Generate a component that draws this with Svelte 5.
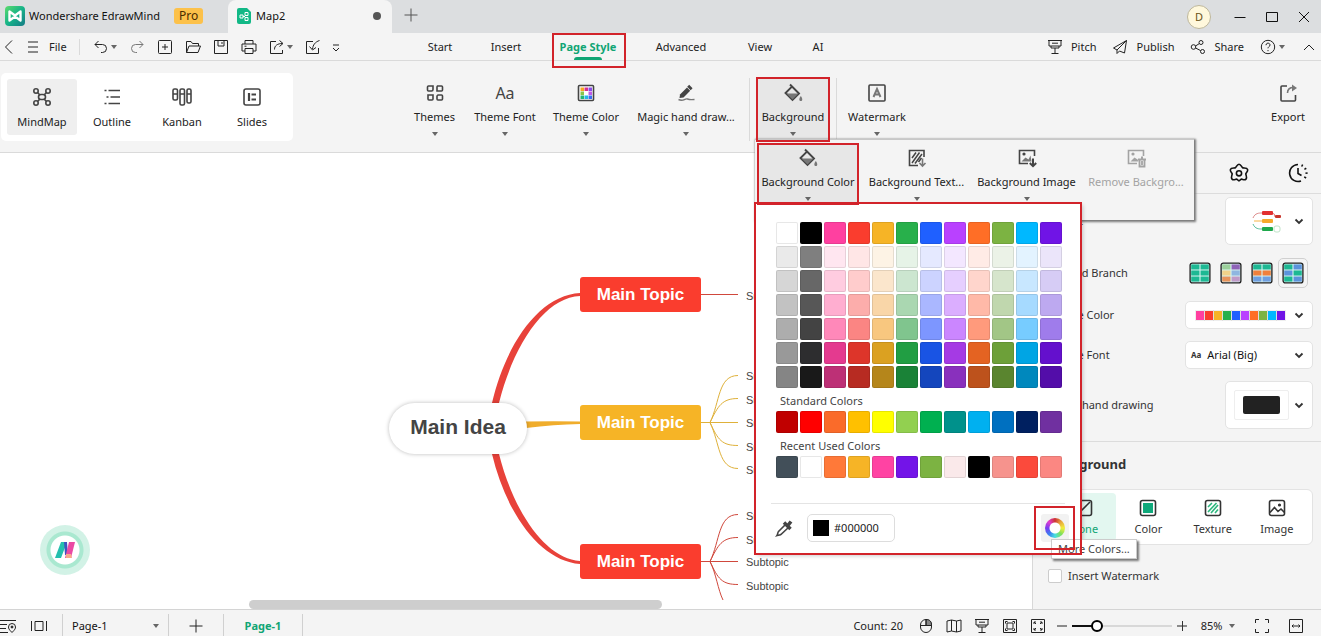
<script>
  const icons = {
    back: '<path d="M11 1.500 4.500 8l6.500 6.500"/>',
    menu: '<path d="M3 3h10M3 8h10M3 13h10"/>',
    undo: '<path d="M5.500 2 2 5.500 5.500 9M2 5.500h7.500a4 4 0 0 1 0 8H8"/>',
    redo: '<path d="M10.500 2 14 5.500 10.500 9M14 5.500H6.500a4 4 0 0 0 0 8H8"/>',
    add: '<rect x="1.500" y="1.500" width="13" height="13" rx="1"/><path d="M8 5v6M5 8h6"/>',
    open: '<path d="M1.500 13.500v-11H6l1.500 2h6V7M1.500 13.500 4 7h11.500L13 13.500z"/>',
    save: '<path d="M1.500 1.500h13v13h-13zM5 1.500V7h6V1.500M9 3v2"/>',
    print: '<path d="M4 5V1.500h8V5M4 12H1V5h14v7h-3M4 9.500h8v5H4zM3.500 7.200h2"/>',
    share: '<path d="M7 2.500H1.500v12h12V11M5.500 10.500c0-4 3-6 8-6M10.500 1.500l3.500 3-3.500 3"/>',
    import: '<path d="M8 2.500H1.500v12h12V9M14.500 1.500C10 3 8 6 7.500 10M4.500 7.500l3 3.500 3.500-2.500"/>',
    more: '<path d="M5 6h6M5 9l3 3 3-3"/>',
    pitch: '<path d="M1 1.500h14M2 1.500v5.500h12V1.500M5 4.200h6M4 7v2h8V7M8 9v5M4.500 14.500h7"/>',
    plane: '<path d="M14.500 1.500 1.500 9l3.500 2v3.500L7.500 12l5 2zM14.500 1.500 5 11"/>',
    nodes: '<circle cx="3.500" cy="8" r="2.300"/><circle cx="11" cy="3.500" r="2"/><circle cx="12.500" cy="12.500" r="2"/><path d="M5.500 7l3.800-2.400M5.600 9l5 2.600"/>',
    help: '<circle cx="8" cy="8" r="6.700"/><path d="M6 6.200c0-2.800 4-2.600 4-.2C10 7.500 8 7.600 8 9.300M8 11v1.200"/>',
    up: '<path d="M3 11l5-5 5 5"/>',
    down: '<path d="M4.500 6.500 8 10l3.500-3.500" stroke-width="1.800"/>',
    plus: '<path d="M8 1.500v13M1.500 8h13"/>',
    minus: '<path d="M3 8h10"/>',
    min: '<path d="M2.500 8.500h11"/>',
    max: '<path d="M2.500 3.500h11v9h-11z"/>',
    close: '<path d="M3 3l10 10M13 3 3 13"/>',
    locate: '<path d="M0 2.500h16M0 6.500h7M0 10.500h6M0 14.500h8M12 14.500C9 11.500 8.500 10.500 8.500 9a3.500 3.500 0 0 1 7 0c0 1.500-.5 2.500-3.500 5.500z"/><circle cx="12" cy="9" r="1" fill="currentColor"/>',
    frame: '<path d="M.5 3v10M15.500 3v10M4 3.500h8v9H4z"/>',
    mouse: '<rect x="2.500" y="1.500" width="11" height="13" rx="5.500"/><path d="M8 1.500c4 0 5.500 2 5.500 6H8z" fill="#888"/><path d="M2.500 7.500h11M8 1.500v6"/>',
    map: '<path d="M1 3l4.500-1 5 1 4.500-1v11l-4.500 1-5-1-4.500 1zM5.500 2v11M10.500 3v11"/>',
    fit: '<path d="M1.500 1.500h13v13h-13zM5 5h6v6H5zM3.500 5.500v-2h2M10.500 3.500h2v2M3.500 10.500v2h2M12.500 10.500v2h-2"/>',
    expand: '<path d="M1.500 1.500h13v13h-13zM4 6V4h2M10 4h2v2M4 10v2h2M12 10v2h-2M4 4l2 2M12 4l-2 2M4 12l2-2M12 12l-2-2"/>',
    corners: '<path d="M1.500 5V1.500H5M11 1.500h3.500V5M1.500 11v3.500H5M14.500 11v3.500H11"/>',
    width: '<path d="M1.500 1.500h13v13h-13zM4 8h8M5.500 6.500 4 8l1.500 1.500M10.500 6.500 12 8l-1.500 1.500"/>'
  };

  // 20px grid, heavier strokes
  const large = {
    mindmap: '<circle cx="4" cy="4" r="2.200"/><circle cx="16" cy="4" r="2.200"/><circle cx="4" cy="16" r="2.200"/><circle cx="16" cy="16" r="2.200"/><rect x="6.500" y="7.500" width="7" height="5" rx="2.500"/><path d="M5.500 5.500l2.500 2.500M14.500 5.500 12 8M5.500 14.500 8 12M14.500 14.500 12 12"/>',
    outline: '<path d="M6.500 3.500H18M8.500 10H18M6.500 16.500H18M2.500 3.500h2M4.500 10h2M2.500 16.500h2"/>',
    kanban: '<rect x="1" y="2" width="4.500" height="11" rx="1.500"/><rect x="8" y="2" width="4.500" height="16" rx="1.500"/><rect x="15" y="2" width="4" height="14" rx="1.500"/><path d="M1 7h4.500M8 7h4.500M15 7h4"/>',
    slides: '<rect x="2" y="2" width="16" height="16" rx="2"/><path d="M7 6v8M9.500 7.500H14M9.500 12.500H14" stroke-width="2.200"/>',
    themes: '<path d="M3.500 3h4.500v3.500A1.500 1.500 0 0 1 6.500 8H3.500a1 1 0 0 1-1-1V4a1 1 0 0 1 1-1zM12.500 3h4a1 1 0 0 1 1 1v3a1 1 0 0 1-1 1H12V4zM3 12h5v4a1 1 0 0 1-1 1H4a1 1 0 0 1-1-1zM13 12h3.500a1 1 0 0 1 1 1v3a1 1 0 0 1-1 1H13a1 1 0 0 1-1-1v-3z"/>',
    palette: '<rect x="2.500" y="2.500" width="15" height="15" rx="1" fill="#fff"/><g stroke="none"><path fill="#f5a623" d="M4.500 4.500H8V8H4.500z"/><path fill="#d6308f" d="M8.500 4.500H12V8H8.500z"/><path fill="#8b4be8" d="M12.500 4.500H16V8h-3.500z"/><path fill="#8bc34a" d="M4.500 8.500H8V12H4.500z"/><path fill="#c05be8" d="M12.500 8.500H16V12h-3.500z"/><path fill="#22b573" d="M4.500 12.500H8V16H4.500z"/><path fill="#26b6e8" d="M8.500 12.500H12V16H8.500z"/><path fill="#3b6cf0" d="M12.500 12.500H16V16h-3.500z"/></g>',
    pen: '<path d="M4 11.500 11 4.500l3.200 3.200L7.500 14.500 3.500 15z" fill="currentColor" stroke="none"/><path d="M12.200 2.800l3.400 3.400" stroke-width="2.800"/><path d="M2.500 16.500c5 2.500 6-1.500 9-.500s3 .500 7 .500" stroke="#777" stroke-width="1.400"/>',
    bucket: '<path d="M7 1.500 9 3.500M9 3.500l7 7-6.500 6.500-7-7z" stroke-width="1.900"/><path d="M3.500 10.500h12L9.500 16.500z" fill="#777" stroke="none"/><path d="M17.800 13c2.600 3.800 1.200 5 0 5s-2.600-1.200 0-5z" fill="#777" stroke="none"/>',
    watermark: '<rect x="2" y="2" width="16" height="16" rx="1"/><path d="M6.500 14 10 6l3.500 8M8 11.500h4" stroke="#777" stroke-width="2"/>',
    texture: '<path d="M17 9V2.500H2.500v15H11"/><path d="M5 10l4-5.500M5 15l7.500-10.500M8 15.500l7-9.500M11.500 14l3-4" stroke-width="1.500"/><path d="M15.500 10.500v7M12.500 15l3 3 3-3" stroke="#777"/>',
    picture: '<path d="M17.500 8V2.500h-15v13H11"/><path d="M4.500 13.500l4-4 3 2 2-4 1 6z" fill="#777" stroke="none"/><circle cx="7" cy="6" r=".8" fill="currentColor"/><path d="M16 10.500V18M12.800 15l3.200 3.200 3.200-3.200" stroke-width="2"/>',
    remove: '<path d="M17.500 8V2.500h-15v13H11"/><path d="M4.500 13.500l4-4 3 2 1 2z" fill="currentColor" stroke="none"/><circle cx="7" cy="6" r=".8"/><path d="M12 11.500h8M15 9.500h2M13.500 12v6.500h5V12M16 13v4" stroke-width="1.800"/>',
    export: '<path d="M9 3H4a1 1 0 0 0-1 1v13a1 1 0 0 0 1 1h12.500a1 1 0 0 0 1-1v-5"/><path d="M9.500 10c0-4 2-5.500 6-5.500" stroke="#777"/><path d="M14 1.500l5 3.500-5 3.500z" fill="#777" stroke="none"/>',
    flower: '<path d="M10 1.200c2 0 2.600 2.900 3.600 3.500s4.300-.3 5 1.700-1.700 3.200-1.800 4.400 1.700 3.700.2 5.300-3.500-.200-4.600 0S10.900 17.900 10 17.900s-1.300-1.600-2.400-1.800-3.100 1.600-4.600 0 .3-4.100.2-5.300S.7 8.400 1.400 6.400s4-1.100 5-1.700S8 1.200 10 1.200z"/><circle cx="10" cy="10.300" r="2.600"/>',
    clock: '<path d="M10 1.500a8.500 8.500 0 1 0 3 16.500"/><path d="M10 5v5.500l3.500 2"/><path d="M13.500 2.300a8.500 8.500 0 0 1 2 14.200" stroke-dasharray="1.500 3" stroke-width="2.200"/>',
    dropper: '<path d="M10.500 6.500 3.500 13.500c-1 1-.5 2.500-1.500 4 1.500-.500 3.500 0 4.500-1.500l7-6.500"/><path d="M9 4.500l6.500 6.500M12.500 8l3.500-4.500" stroke-width="3.500"/>',
    none: '<rect x="2.500" y="2.500" width="15" height="15" rx="2"/><path d="M4 16 16 4"/>',
    solid: '<rect x="2.500" y="2.500" width="15" height="15" rx="2" fill="#fff"/><path d="M5 5h10v10H5z" fill="#10a97b" stroke="none"/>',
    hatch: '<rect x="2.500" y="2.500" width="15" height="15" rx="2"/><path d="M5 9l4-4M5 14l8.500-9M8 15l7-8M12 15l3-3.500" stroke="#2cb67d"/>',
    image: '<rect x="2.500" y="2.500" width="15" height="15" rx="2"/><path d="M3 14.500l4.500-5 3.500 4 3-2.500 3.500 3.500"/><circle cx="12.500" cy="7" r=".8"/>'
  };

  const quick = ['add', 'open', 'save', 'print'];
  const tabs = [
    { name: 'Start', width: 66 },
    { name: 'Insert', width: 66 },
    { name: 'Page Style', width: 98 },
    { name: 'Advanced', width: 88 },
    { name: 'View', width: 70 },
    { name: 'AI', width: 46 }
  ];
  const views = [
    { name: 'MindMap', icon: 'mindmap' },
    { name: 'Outline', icon: 'outline' },
    { name: 'Kanban', icon: 'kanban' },
    { name: 'Slides', icon: 'slides' }
  ];
  const tools = [
    { name: 'Themes', icon: 'themes', width: 61 },
    { name: 'Theme Font', icon: '', width: 80 },
    { name: 'Theme Color', icon: 'palette', width: 82 },
    { name: 'Magic hand draw...', icon: 'pen', width: 118 }
  ];

  const palette = [
    ['#ffffff', '#000000', '#ff40a0', '#fa3d2e', '#f6b426', '#28b04b', '#1f60ff', '#b941ff', '#ff6e26', '#7cb342', '#00b8ff', '#7014e6'],
    ['#eaeaea', '#7f7f7f', '#ffe6f0', '#ffe6e6', '#fdf3e5', '#e6f3e7', '#e5e9ff', '#f3e7ff', '#ffebe6', '#ebf2e7', '#e3f3ff', '#ebe5fa'],
    ['#d6d6d6', '#676767', '#ffcce0', '#ffcccc', '#fbe6cc', '#cce6d0', '#ccd3ff', '#e6cfff', '#ffd5cc', '#d6e5cc', '#c8e7ff', '#d6ccf5'],
    ['#c2c2c2', '#575757', '#ffaed0', '#fcadab', '#f9d6a8', '#aad7b1', '#aab7ff', '#dbaeff', '#ffb9a8', '#c0d7ae', '#a6daff', '#bda9f0'],
    ['#adadad', '#434343', '#ff88b9', '#fb8583', '#f8c77f', '#80c58e', '#7d96ff', '#cb86ff', '#ff9a7c', '#a2c686', '#77ccff', '#9f7ceb'],
    ['#999999', '#2d2d2f', '#e43a8f', '#dd352a', '#dba121', '#219e43', '#1954e4', '#a53ae4', '#e46322', '#6da039', '#00a5e4', '#6410cd'],
    ['#858585', '#191919', '#bd3076', '#b72b22', '#b5861b', '#1a8237', '#1446bd', '#8930bd', '#bd521c', '#5a852f', '#0088bd', '#530da9']
  ];
  const standard = ['#c00000', '#ff0000', '#fa6b2a', '#ffc000', '#ffff00', '#92d050', '#00b050', '#00918b', '#00b0f0', '#0070c0', '#002060', '#7030a0'];
  const recent = ['#424f59', '#ffffff', '#ff7939', '#f6b426', '#ff43a3', '#7314e8', '#7cb342', '#fae9ea', '#000000', '#f6938d', '#fb4a3c', '#fb8782'];

  const branches = [
    ['#1db893', '#1db893', '#1db893', '#1db893', '#1db893', '#1db893'],
    ['#9bcf9a', '#8f63b8', '#f0d28a', '#8fb6e0', '#e8935a', '#c09ac8'],
    ['#1db893', '#1db893', '#f0803c', '#f0803c', '#6f9fe0', '#6f9fe0'],
    ['#1db893', '#5b93dc', '#5b93dc', '#1db893', '#1db893', '#5b93dc']
  ];

  const topics = [
    { y: 124, color: '#fa3d2e', kids: [143] },
    { y: 252, color: '#f6b426', kids: [223, 247, 270, 294, 317] },
    { y: 391, color: '#fa3d2e', kids: [363, 387, 409, 433] }
  ];
  const fills = [
    { name: 'None', icon: 'none' },
    { name: 'Color', icon: 'solid' },
    { name: 'Texture', icon: 'hatch' },
    { name: 'Image', icon: 'image' }
  ];

  let tab = $state('Page Style');
  let view = $state('MindMap');
  let fill = $state('None');
  let hex = $state('#000000');
  let zoom = $state(22);
  let page = $state('Page-1');
  let watermark = $state(false);
</script>

{#snippet icon(name)}
  <svg class="icon" viewBox="0 0 16 16" aria-hidden="true">{@html icons[name]}</svg>
{/snippet}

{#snippet big(name)}
  <svg class="icon big" viewBox="0 0 20 20" aria-hidden="true">{@html large[name]}</svg>
{/snippet}

{#snippet swatches(colors)}
  <div class="swatches">
    {#each colors as color}
      <button class="swatch" aria-label={color} style="background: {color}" onclick={() => (hex = color)}></button>
    {/each}
  </div>
{/snippet}

<div class="app">
  <header class="titlebar">
    <div class="brand">
      <svg class="logo" viewBox="0 0 20 20" aria-hidden="true">
        <defs>
          <linearGradient id="brand" x1="0" y1="0" x2="1" y2="1">
            <stop offset="0" stop-color="#5edc6c" /><stop offset=".5" stop-color="#16b389" /><stop offset="1" stop-color="#157a86" />
          </linearGradient>
        </defs>
        <rect width="20" height="20" rx="4" fill="url(#brand)" />
        <path d="M4.500 5.500v9l5.500-4 5.500 4v-9L10 9.500z" fill="none" stroke="#fff" stroke-width="2.400" stroke-linejoin="round" />
      </svg>
      <span>Wondershare EdrawMind</span>
      <span class="pro">Pro</span>
    </div>
    <div class="doc">
      <svg class="file" viewBox="0 0 14 16" aria-hidden="true">
        <path d="M2 0h8l4 4v10a2 2 0 0 1-2 2H2a2 2 0 0 1-2-2V2a2 2 0 0 1 2-2z" fill="#12b886" />
        <path d="M3 7h3v3H3zM8 4.500h3v3H8zM8 9.500h3v3H8zM6 8.500h2" fill="none" stroke="#fff" />
      </svg>
      <span>Map2</span>
      <i class="dirty"></i>
    </div>
    <button class="new" aria-label="New tab">{@render icon('plus')}</button>
    <div class="window">
      <button class="avatar">D</button>
      <button aria-label="Minimize">{@render icon('min')}</button>
      <button aria-label="Maximize">{@render icon('max')}</button>
      <button aria-label="Close">{@render icon('close')}</button>
    </div>
  </header>

  <nav class="menubar">
    <div class="quick">
      <button class="back" aria-label="Back">{@render icon('back')}</button>
      <button class="filemenu">{@render icon('menu')}File</button>
      <button class="pair" aria-label="Undo">{@render icon('undo')}<i class="caret"></i></button>
      <button class="faint" aria-label="Redo">{@render icon('redo')}</button>
      {#each quick as name}
        <button aria-label={name}>{@render icon(name)}</button>
      {/each}
      <button class="pair" aria-label="Share">{@render icon('share')}<i class="caret"></i></button>
      <button aria-label="Import">{@render icon('import')}</button>
      <button class="back" aria-label="More">{@render icon('more')}</button>
    </div>
    <div class="tabs">
      {#each tabs as t}
        <button class:active={tab === t.name} style="width: {t.width}px" onclick={() => (tab = t.name)}>
          <span>{t.name}</span>
        </button>
      {/each}
    </div>
    <div class="actions">
      <button>{@render icon('pitch')}Pitch</button>
      <button>{@render icon('plane')}Publish</button>
      <button>{@render icon('nodes')}Share</button>
      <button class="help" aria-label="Help">{@render icon('help')}<i class="caret"></i></button>
      <button aria-label="Collapse ribbon">{@render icon('up')}</button>
    </div>
  </nav>

  <section class="ribbon">
    <div class="views">
      {#each views as v}
        <button class:active={view === v.name} onclick={() => (view = v.name)}>
          {@render big(v.icon)}
          <span>{v.name}</span>
        </button>
      {/each}
    </div>
    <div class="tools">
      {#each tools as tool}
        <button class="tool" style="width: {tool.width}px">
          {#if tool.icon}{@render big(tool.icon)}{:else}<b class="aa">Aa</b>{/if}
          <span>{tool.name}</span>
          <i class="caret"></i>
        </button>
      {/each}
      <div class="anchor">
        <button class="tool open marked">
          {@render big('bucket')}
          <span>Background</span>
          <i class="caret"></i>
        </button>

        <div class="popover">
          <button class="tool open marked first">
            {@render big('bucket')}
            <span>Background Color</span>
            <i class="caret"></i>
          </button>
          <button class="tool second">
            {@render big('texture')}
            <span>Background Text...</span>
            <i class="caret"></i>
          </button>
          <button class="tool third">
            {@render big('picture')}
            <span>Background Image</span>
            <i class="caret"></i>
          </button>
          <button class="tool fourth" disabled>
            {@render big('remove')}
            <span>Remove Backgro...</span>
          </button>

          <div class="picker marked">
            <div class="grid">
              {#each palette as row}
                {@render swatches(row)}
              {/each}
            </div>
            <h3>Standard Colors</h3>
            {@render swatches(standard)}
            <h3>Recent Used Colors</h3>
            {@render swatches(recent)}
            <div class="custom">
              <button class="dropper" aria-label="Pick from screen">{@render big('dropper')}</button>
              <label class="hex">
                <i style="background: {hex}"></i>
                <input aria-label="Hex color" bind:value={hex} />
              </label>
              <div class="wheelbox marked">
                <button class="wheel" aria-label="More Colors"><i></i></button>
                <div class="tip" role="tooltip">More Colors...</div>
              </div>
            </div>
          </div>
        </div>
      </div>
      <button class="tool last">
        {@render big('watermark')}
        <span>Watermark</span>
        <i class="caret"></i>
      </button>
    </div>
    <button class="tool export">
      {@render big('export')}
      <span>Export</span>
    </button>
  </section>

  <main>
    <section class="canvas">
      <svg class="links" width="800" height="447" aria-hidden="true">
        <g fill="#e8423a">
          <path d="M492 250C506 190 540 142 580 140v3C546 144 514 190 499 250z" />
          <path d="M492 301C506 360 540 408 580 411v-3C546 406 514 360 499 301z" />
        </g>
        <path d="M526 268.500Q554 268 580 268.500v2.500Q554 271.500 526 275z" fill="#f0ad2c" />
        <g fill="none" stroke="#d0483c">
          <path d="M701 141.500h37M701 408.500h37" />
          <path d="M710 408.500C720 388 718 361.500 738 361.500M710 408.500C718 392 722 384.500 738 384.500M710 408.500C718 426 722 431.500 738 431.500M710 408.500C716 420 718 437 723 447" />
        </g>
        <g fill="none" stroke="#dfb13a">
          <path d="M701 269.500h37" />
          <path d="M710 269.500C720 249 718 222.500 738 222.500M710 269.500C718 253 722 245.500 738 245.500M710 269.500C718 287 722 292.500 738 292.500M710 269.500C720 290 718 315.500 738 315.500" />
        </g>
      </svg>
      <div class="idea">Main Idea</div>
      {#each topics as topic}
        <div class="topic" style="top: {topic.y}px; background: {topic.color}">Main Topic</div>
        {#each topic.kids as y}
          <div class="sub" style="top: {y}px">Subtopic</div>
        {/each}
      {/each}
      <button class="assistant" aria-label="Assistant">
        <svg viewBox="0 0 20 16" aria-hidden="true">
          <path d="M6 0h6L6 16H0z" fill="#25bfae" />
          <path d="M9 0h3l1 13h-3z" fill="#3d55c0" />
          <path d="M14 0h6l-4 16h-6z" fill="#ea4aa4" />
          <path d="M11 12h5l1 4h-6z" fill="#f8a98a" />
        </svg>
      </button>
      <div class="hscroll"></div>
    </section>

    <aside>
      <div class="asidehead">
        <button aria-label="Style">{@render big('flower')}</button>
        <button aria-label="History">{@render big('clock')}</button>
      </div>
      <div class="fields">
        <div class="field tall">
          <span>Layout</span>
          <button class="card square" aria-label="Layout">
            <svg class="mini" viewBox="0 0 40 24" aria-hidden="true">
              <path d="M11 9C13 4 17 4 20 4" fill="none" stroke="#d88" />
              <path d="M12 12h8" stroke="#f5b445" />
              <path d="M11 15C13 20 17 20 20 20" fill="none" stroke="#5b9" />
              <path d="M30 4q3 0 3 4" fill="none" stroke="#e77" />
              <rect x="20" y="2" width="11" height="4" rx="1" fill="#e23030" />
              <rect x="20" y="10" width="11" height="4" rx="1" fill="#f5a92c" />
              <rect x="20" y="18" width="11" height="4" rx="1" fill="#1ea84c" />
              <rect x="33" y="6" width="6" height="3" rx="1" fill="#c9352b" />
              <rect x="32" y="17" width="6" height="6" rx="2" fill="#fff" stroke="#bfe3c8" />
            </svg>
            {@render icon('down')}
          </button>
        </div>
        <div class="field branch">
          <span>Colored Branch</span>
          <div class="styles">
            {#each branches as cells, n}
              <button class:picked={n === 3} aria-label="Branch style {n + 1}">
                <svg viewBox="0 0 20 20" aria-hidden="true">
                  <rect x="1" y="1" width="18" height="18" rx="2" fill="#d8f3f0" stroke="#222" stroke-width="1.200" />
                  {#each cells as color, i}
                    <rect x={i % 2 ? 10.5 : 2} y={2.2 + Math.floor(i / 2) * 5.5} width="7.500" height="4.600" fill={color} />
                  {/each}
                </svg>
              </button>
            {/each}
          </div>
        </div>
        <div class="field">
          <span>Theme Color</span>
          <button class="card" aria-label="Theme Color">
            <span class="strip">
              {#each palette[0].slice(2) as color}<i style="background: {color}"></i>{/each}
            </span>
            {@render icon('down')}
          </button>
        </div>
        <div class="field">
          <span>Theme Font</span>
          <button class="card"><b>Aa</b><span class="font">Arial (Big)</span>{@render icon('down')}</button>
        </div>
        <div class="field tall">
          <span>Magic hand drawing</span>
          <button class="card square" aria-label="Magic hand drawing">
            <span class="ink"><i></i></span>
            {@render icon('down')}
          </button>
        </div>
      </div>
      <div class="background">
        <h2>Background</h2>
        <div class="fills">
          {#each fills as f}
            <button class:active={fill === f.name} onclick={() => (fill = f.name)}>
              {@render big(f.icon)}
              <span>{f.name}</span>
            </button>
          {/each}
        </div>
        <label class="check"><input type="checkbox" bind:checked={watermark} />Insert Watermark</label>
      </div>
    </aside>
  </main>

  <footer>
    <button class="loc" aria-label="Locate">{@render icon('locate')}</button>
    <button class="fr" aria-label="Frames">{@render icon('frame')}</button>
    <div class="pages">
      <select aria-label="Page" bind:value={page}><option>Page-1</option></select>
      <i class="caret"></i>
    </div>
    <button class="addpage" aria-label="Add page">{@render icon('plus')}</button>
    <button class="pagetab">Page-1</button>
    <div class="status">
      <span class="count">Count: 20</span>
      {#each ['mouse', 'map', 'pitch', 'fit', 'expand'] as name}
        <button aria-label={name}>{@render icon(name)}</button>
      {/each}
      <button class="step" aria-label="Zoom out">{@render icon('minus')}</button>
      <input class="zoom" type="range" min="0" max="100" aria-label="Zoom" bind:value={zoom} style="--v: {zoom}%" />
      <button class="step" aria-label="Zoom in">{@render icon('minus')}<i class="bar"></i></button>
      <button class="percent">85%<i class="caret"></i></button>
      <button class="full" aria-label="Full screen">{@render icon('corners')}</button>
      <button class="full" aria-label="Fit width">{@render icon('width')}</button>
    </div>
  </footer>
</div>

<style>
  :global(body) {
    background: #fff;
  }

  .app {
    display: flex;
    flex-direction: column;
    height: 100vh;
    overflow: hidden;
    background: #f4f4f4;
    color: #222;
    font: 11px/16px "Noto Sans", "Open Sans", sans-serif;
  }

  button,
  input,
  select {
    margin: 0;
    padding: 0;
    border: 0;
    background: none;
    color: inherit;
    font: inherit;
  }

  button {
    display: flex;
    align-items: center;
    justify-content: center;
    white-space: nowrap;
    flex: none;
  }

  .icon {
    width: 16px;
    height: 16px;
    flex: none;
    fill: none;
    stroke: currentColor;
    stroke-width: 1;
  }

  .big {
    width: 20px;
    height: 20px;
    stroke-width: 1.6;
  }

  .caret {
    border: 3px solid transparent;
    border-top: 4px solid #666;
    border-bottom: 0;
    flex: none;
  }

  /* callout frames */
  .marked::after {
    content: "";
    position: absolute;
    inset: -1px;
    border: 2px solid #d2232a;
    pointer-events: none;
    z-index: 5;
  }

  .titlebar {
    display: flex;
    height: 33px;
    flex: none;
    background: #dcdee0;
    color: #111;
  }

  .brand {
    display: flex;
    align-items: center;
    width: 228px;
    padding: 0 0 2px 5px;
    box-sizing: border-box;
  }

  .logo {
    width: 20px;
    height: 20px;
    margin-right: 4px;
  }

  .pro {
    margin-left: 14px;
    padding: 0 5px;
    border-radius: 3px;
    background: #fcc14a;
    color: #4a2c00;
    font-size: 12px;
  }

  .doc {
    display: flex;
    align-items: center;
    width: 164px;
    padding: 0 11px 2px 9px;
    box-sizing: border-box;
    border-radius: 8px 8px 0 0;
    background: #f4f4f4;
  }

  .file {
    width: 14px;
    height: 16px;
    margin-right: 5px;
  }

  .dirty {
    width: 8px;
    height: 8px;
    margin-left: auto;
    border-radius: 50%;
    background: #555;
  }

  .new {
    width: 38px;
    height: 30px;
    color: #555;
  }

  .window {
    display: flex;
    align-items: center;
    margin-left: auto;
    padding-right: 1px;
  }

  .window button {
    width: 32px;
  }

  .window .avatar {
    width: 24px;
    height: 24px;
    margin-right: 13px;
    box-sizing: border-box;
    border: 1px solid #bdb79c;
    border-radius: 50%;
    background: #fff8dc;
    color: #6b5316;
  }

  .menubar {
    display: flex;
    align-items: center;
    height: 28px;
    flex: none;
    box-sizing: border-box;
    border-bottom: 1px solid #dadada;
  }

  .quick {
    display: flex;
    width: 407px;
    flex: none;
  }

  .quick button {
    width: 28px;
  }

  .quick .back {
    width: 18px;
  }

  .quick .filemenu {
    width: 62px;
    gap: 8px;
    justify-content: flex-start;
    padding-left: 7px;
    margin-right: 7px;
    box-sizing: border-box;
    border-right: 1px solid #dadada;
  }

  .quick .pair {
    gap: 2px;
    width: 36px;
  }

  .faint {
    color: #777;
  }

  .tabs {
    display: flex;
  }

  .tabs button {
    height: 27px;
  }

  .tabs .active {
    position: relative;
    color: #10a574;
    font-weight: 700;
  }

  .tabs .active::before {
    content: "";
    position: absolute;
    bottom: 0;
    width: 28px;
    height: 3px;
    border-radius: 3px 3px 0 0;
    background: #10a574;
  }

  .tabs .active::after {
    content: "";
    position: absolute;
    inset: 0 11px -8px 13px;
    border: 2px solid #d2232a;
    z-index: 5;
  }

  .actions {
    display: flex;
    gap: 16px;
    margin-left: auto;
    padding-right: 4px;
  }

  .actions button {
    gap: 8px;
  }

  .actions .help {
    gap: 3px;
  }

  .ribbon {
    display: flex;
    align-items: flex-start;
    height: 92px;
    flex: none;
    box-sizing: border-box;
    border-bottom: 1px solid #dadada;
  }

  .views {
    display: flex;
    margin: 12px 111px 0 1px;
    padding: 6px;
    border-radius: 5px;
    background: #fff;
  }

  .views button {
    flex-direction: column;
    gap: 7px;
    width: 70px;
    height: 56px;
    padding-top: 2px;
    box-sizing: border-box;
    border-radius: 3px;
    color: #444;
  }

  .views span,
  .tool span {
    color: #222;
  }

  .views .active {
    background: #efefef;
  }

  .tools {
    display: flex;
    padding-top: 17px;
  }

  .tool {
    flex-direction: column;
    justify-content: flex-start;
    height: 63px;
    padding-top: 5px;
    box-sizing: border-box;
    color: #444;
  }

  .tool span {
    margin: 6px 0 7px;
  }

  .tool.open {
    background: #e7e7e7;
  }

  .aa {
    height: 20px;
    font-size: 16px;
    line-height: 20px;
    font-weight: 400;
  }

  .anchor {
    position: relative;
    margin-left: 4px;
    padding: 0 7px;
    border: 1px solid #dadada;
    border-width: 0 1px;
    z-index: 2;
  }

  .anchor > .tool {
    position: relative;
    width: 72px;
  }

  .last {
    width: 80px;
  }

  .export {
    margin: 17px 13px 0 auto;
    width: 40px;
  }

  .popover {
    position: absolute;
    top: 61px;
    left: 5px;
    display: flex;
    padding: 4px 0 16px 3px;
    background: #f4f4f4;
    border-top: 1px solid #c8c8c8;
    box-shadow: 1px 1px 2px 1px #777;
  }

  .popover .tool {
    height: 60px;
    padding-top: 4px;
  }

  .first {
    position: relative;
    width: 100px;
  }

  .second {
    width: 117px;
  }

  .third {
    width: 103px;
  }

  .fourth {
    width: 116px;
  }

  .fourth:disabled,
  .fourth:disabled span {
    color: #a3a3a3;
  }

  .picker {
    position: absolute;
    top: 63px;
    left: 0;
    width: 326px;
    padding: 19px 21px 5px;
    box-sizing: border-box;
    background: #fff;
    box-shadow: 2px 2px 4px #0003;
  }

  .grid {
    display: flex;
    flex-direction: column;
    gap: 2px;
  }

  .swatches {
    display: flex;
    gap: 2px;
  }

  .swatch {
    width: 22px;
    height: 22px;
    box-sizing: border-box;
    border: 1px solid #00000018;
    border-radius: 2px;
  }

  h3 {
    margin: 5px 4px 2px;
    font-size: 11px;
    line-height: 16px;
    font-weight: 400;
    color: #444;
  }

  .custom {
    display: flex;
    align-items: center;
    margin: 25px -5px 0;
    padding-top: 3px;
    border-top: 1px solid #e4e4e4;
  }

  .dropper {
    width: 28px;
    color: #444;
  }

  .hex {
    display: flex;
    align-items: center;
    gap: 5px;
    width: 88px;
    height: 28px;
    margin-left: 8px;
    padding: 0 5px;
    box-sizing: border-box;
    border: 1px solid #ddd;
    border-radius: 5px;
  }

  .hex i {
    width: 16px;
    height: 16px;
    flex: none;
  }

  .hex input {
    width: 100%;
    min-width: 0;
  }

  .wheelbox {
    position: relative;
    width: 39px;
    height: 42px;
    margin: 0 -9px 0 auto;
    display: flex;
    align-items: center;
    justify-content: center;
  }

  .wheel {
    width: 28px;
    height: 28px;
    border-radius: 3px;
    background: #f2f2f2;
  }

  .wheel i {
    width: 20px;
    height: 20px;
    border-radius: 50%;
    background: radial-gradient(#fff 5px, transparent 6px),
      conic-gradient(#c33, #e8a83c, #f2ee3c, #7fe05c, #46e0e0, #3c7cf0, #7a3cf0, #e03cd0, #c33);
  }

  .tip {
    position: absolute;
    top: 32px;
    left: 16px;
    padding: 1px 6px;
    border: 1px solid #ccc;
    background: #fff;
    box-shadow: 2px 2px 2px #777;
    color: #444;
    white-space: nowrap;
    z-index: 4;
  }

  main {
    display: flex;
    flex: 1;
    min-height: 0;
  }

  .canvas {
    position: relative;
    flex: 1;
    overflow: hidden;
    background: #fff;
    font-family: "Liberation Sans", Arial, sans-serif;
  }

  .links {
    position: absolute;
    top: 0;
    left: 0;
  }

  .idea,
  .topic,
  .sub,
  .assistant,
  .hscroll {
    position: absolute;
  }

  .idea {
    top: 250px;
    left: 389px;
    width: 138px;
    padding-bottom: 4px;
    border-radius: 26px;
    background: #fff;
    box-shadow: 0 0 4px #0004;
    color: #444;
    font-size: 21px;
    line-height: 47px;
    font-weight: 700;
    text-align: center;
  }

  .topic {
    left: 580px;
    width: 121px;
    border-radius: 3px;
    color: #fff;
    font-size: 17px;
    line-height: 35px;
    font-weight: 700;
    text-align: center;
  }

  .sub {
    left: 746px;
    margin-top: -8px;
    color: #444;
  }

  .assistant {
    top: 372px;
    left: 40px;
    width: 50px;
    height: 50px;
    border-radius: 50%;
    background: radial-gradient(#fff 14px, #a9e8d0 15px 18px, #d2f2e6 19px);
  }

  .assistant svg {
    width: 20px;
    height: 16px;
  }

  .hscroll {
    bottom: 0;
    left: 249px;
    width: 413px;
    height: 9px;
    border-radius: 5px;
    background: #cecece;
  }

  aside {
    width: 289px;
    flex: none;
    box-sizing: border-box;
    border-left: 1px solid #d8d8d8;
    overflow: hidden;
    color: #333;
  }

  .asidehead {
    display: flex;
    justify-content: flex-end;
    gap: 39px;
    height: 41px;
    padding-right: 13px;
    box-sizing: border-box;
    border-bottom: 1px solid #dcdcdc;
    color: #111;
  }

  .fields {
    display: flex;
    flex-direction: column;
    gap: 12px;
    padding: 3px 8px 12px 15px;
    border-bottom: 1px solid #dcdcdc;
  }

  .field {
    display: flex;
    align-items: center;
    justify-content: space-between;
    height: 28px;
  }

  .field.tall {
    height: 48px;
  }

  .field.branch {
    height: 32px;
  }

  .card {
    gap: 6px;
    width: 128px;
    height: 28px;
    padding: 0 5px;
    box-sizing: border-box;
    border: 1px solid #e3e3e3;
    border-radius: 5px;
    background: #fff;
    justify-content: flex-end;
  }

  .card b {
    font-size: 8px;
  }

  .font {
    flex: 1;
    text-align: left;
    color: #111;
  }

  .square {
    width: 88px;
    height: 48px;
  }

  .mini {
    width: 40px;
    height: 24px;
    margin-right: 3px;
  }

  .strip {
    display: flex;
    gap: 1px;
  }

  .strip i {
    width: 8px;
    height: 9px;
    outline: 1px solid #0001;
  }

  .styles {
    display: flex;
    gap: 1px;
    margin-right: 5px;
  }

  .styles button {
    width: 30px;
    height: 30px;
    border: 1px solid transparent;
    box-sizing: border-box;
    border-radius: 5px;
  }

  .styles .picked {
    border-color: #d0d0d0;
  }

  .styles svg {
    width: 22px;
    height: 22px;
    flex: none;
  }

  .ink {
    display: flex;
    padding: 5px 8px;
    border: 1px solid #eee;
    border-radius: 2px;
  }

  .square .ink {
    margin-right: -4px;
  }

  .ink i {
    width: 37px;
    height: 18px;
    border-radius: 2px;
    background: #222;
  }

  .background {
    padding: 12px 8px 0 15px;
  }

  h2 {
    margin: 0 0 15px;
    font-size: 13px;
    line-height: 20px;
    font-weight: 700;
  }

  .fills {
    display: flex;
    padding: 3px;
    border: 1px solid #e3e3e3;
    border-radius: 6px;
    background: #fff;
  }

  .fills button {
    flex: 1;
    flex-direction: column;
    gap: 3px;
    height: 48px;
    border-radius: 4px;
  }

  .fills .active {
    background: #e3f7f0;
  }

  .fills .active span {
    color: #10a574;
  }

  .check {
    display: flex;
    align-items: center;
    gap: 6px;
    margin-top: 23px;
  }

  .check input {
    appearance: none;
    width: 14px;
    height: 14px;
    border: 1px solid #ccc;
    border-radius: 2px;
    background: #fff;
  }

  footer {
    display: flex;
    align-items: center;
    height: 27px;
    flex: none;
    padding-top: 6px;
    box-sizing: border-box;
    border-top: 1px solid #d4d4d4;
  }

  .loc {
    width: 16px;
  }

  .fr {
    width: 46px;
  }

  .pages {
    display: flex;
    align-items: center;
    width: 107px;
    padding: 0 9px;
    box-sizing: border-box;
    border: 1px solid #d0d0d0;
    border-width: 0 1px;
  }

  .pages select {
    appearance: none;
    flex: 1;
    height: 24px;
    color: #111;
  }

  .addpage {
    width: 54px;
  }

  .pagetab {
    width: 80px;
    height: 24px;
    border: 1px solid #d0d0d0;
    border-width: 0 1px;
    box-sizing: border-box;
    color: #10a574;
    font-weight: 700;
  }

  .status {
    display: flex;
    align-items: center;
    margin-left: auto;
    padding-right: 13px;
  }

  .count {
    margin-right: 9px;
  }

  .status button {
    width: 28px;
    height: 20px;
  }

  .status .step {
    position: relative;
    width: 20px;
  }

  .bar {
    position: absolute;
    width: 1px;
    height: 10px;
    background: #333;
  }

  .zoom {
    appearance: none;
    width: 100px;
    height: 14px;
    background: linear-gradient(to right, #111 var(--v), #d8d8d8 var(--v)) center / 100% 2px no-repeat;
  }

  .zoom::-webkit-slider-thumb {
    appearance: none;
    width: 12px;
    height: 12px;
    box-sizing: border-box;
    border: 2px solid #000;
    border-radius: 50%;
    background: #fff;
  }

  .status .percent {
    gap: 7px;
    width: 52px;
  }

  .status .full {
    width: 35px;
  }

  .status .full:last-child {
    width: 24px;
    margin-left: 5px;
  }
</style>
